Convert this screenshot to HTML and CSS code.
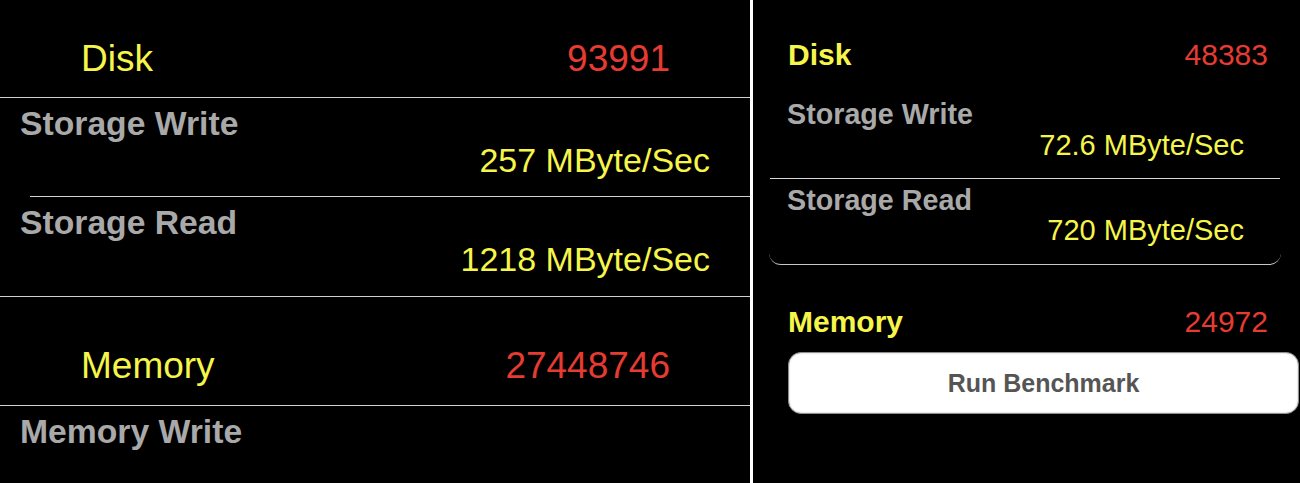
FILE: index.html
```html
<!DOCTYPE html>
<html lang="en">
<head>
  <meta charset="UTF-8">
  <meta name="viewport" content="width=device-width, initial-scale=1.0">
  <title>Benchmark Results</title>
  <link rel="stylesheet" href="styles.css">
</head>
<body>
  <div class="screens">
    <!-- older build: plain table rows -->
    <section class="old">
      <div class="head first">
        <span class="name">Disk</span>
        <span class="score">93991</span>
      </div>
      <div class="sep"></div>
      <div class="item">
        <div class="label">Storage Write</div>
        <div class="value">257 MByte/Sec</div>
      </div>
      <div class="sep inset"></div>
      <div class="item">
        <div class="label">Storage Read</div>
        <div class="value">1218 MByte/Sec</div>
      </div>
      <div class="sep"></div>
      <div class="head second">
        <span class="name">Memory</span>
        <span class="score">27448746</span>
      </div>
      <div class="sep"></div>
      <div class="item">
        <div class="label">Memory Write</div>
      </div>
    </section>

    <div class="divider"></div>

    <!-- newer build: grouped box -->
    <section class="new">
      <div class="head">
        <span class="name">Disk</span>
        <span class="score">48383</span>
      </div>
      <div class="group">
        <div class="item">
          <div class="label">Storage Write</div>
          <div class="value">72.6 MByte/Sec</div>
        </div>
        <div class="sep"></div>
        <div class="item">
          <div class="label">Storage Read</div>
          <div class="value">720 MByte/Sec</div>
        </div>
      </div>
      <div class="head mem">
        <span class="name">Memory</span>
        <span class="score">24972</span>
      </div>
      <button class="run" type="button">Run Benchmark</button>
    </section>
  </div>
</body>
</html>
```

FILE: styles.css
```css
* {
  box-sizing: border-box;
}
body {
  margin: 0;
  padding: 0;
  background-color: #000;
  font-family: "Liberation Sans", Arial, sans-serif;
  overflow: hidden;
}
.screens {
  display: flex;
  width: 1300px;
  height: 483px;
}
.name {
  color: #f5f54a;
}
.score {
  color: #e53b33;
}
.label {
  color: #a9a9a9;
  font-weight: bold;
}
.value {
  color: #f5f54a;
  text-align: right;
}
.name, .score, .label, .value {
  line-height: 1;
  white-space: nowrap;
}

/* left screen */
.old {
  width: 750px;
  flex: none;
}
.old .head {
  display: flex;
  justify-content: space-between;
  padding: 0 80px 0 81px;
  font-size: 37px;
}
.old .head.first {
  height: 97px;
  padding-top: 40px;
}
.old .head.second {
  height: 108px;
  padding-top: 50px;
}
.old .sep {
  height: 1px;
  background-color: #d0d0d0;
}
.old .sep.inset {
  margin-left: 30px;
}
.old .item {
  height: 98px;
  padding: 9px 40px 0 20px;
  font-size: 34px;
}
.old .label {
  font-size: 33.7px;
}
.old .item + .sep + .item {
  height: 99px;
}
.old .value {
  margin-top: 2px;
}

.divider {
  width: 3px;
  flex: none;
  background-color: #fff;
}

/* right screen */
.new {
  flex: 1;
  padding: 40px 0 0 0;
}
.new .head {
  display: flex;
  justify-content: space-between;
  padding: 0 32px 0 35px;
  font-size: 30px;
}
.new .head .name {
  font-weight: bold;
}
.new .group {
  margin: 30px 19px 0 16px;
  border-bottom: 1px solid #c8c8c8;
  border-radius: 0 0 12px 12px;
}
.new .item {
  padding: 0 37px 0 18px;
  font-size: 28.7px;
}
.new .item:first-child {
  padding-bottom: 18px;
}
.new .item + .sep + .item {
  padding-top: 7px;
  padding-bottom: 19px;
}
.new .value {
  margin-top: 2px;
  font-size: 29px;
}
.new .sep {
  height: 1px;
  margin: 0 1px;
  background-color: #d8d8d8;
}
.new .head.mem {
  margin-top: 42px;
}
.run {
  display: block;
  width: 511px;
  height: 62px;
  margin: 15px 0 0 35px;
  background-color: #fff;
  border: 1px solid #8e8e8e;
  border-radius: 13px;
  box-shadow: inset 0 0 2px #bbb;
  color: #555;
  font-family: "Liberation Sans", Arial, sans-serif;
  font-size: 25px;
  font-weight: bold;
  cursor: pointer;
}
```
